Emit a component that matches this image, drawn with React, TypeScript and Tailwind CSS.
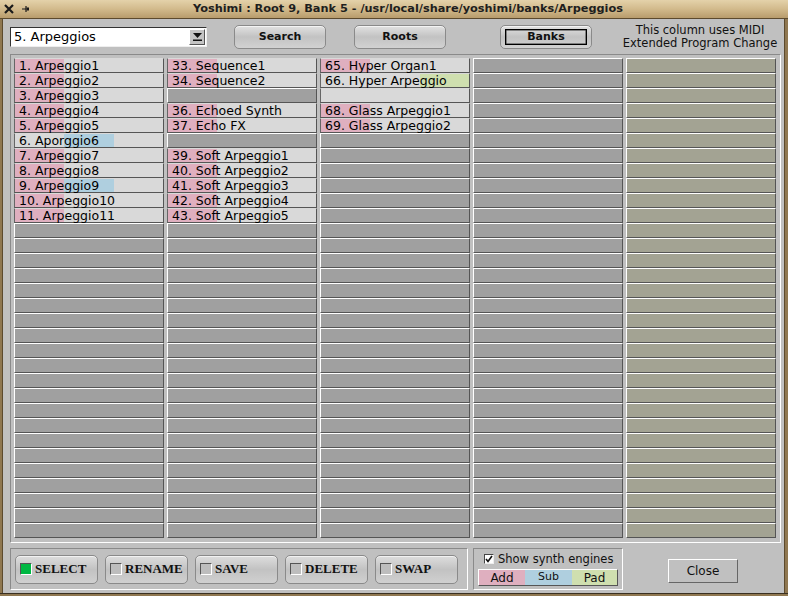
import React from 'react'

type Slot = { name: string; eng: string }

// slot number -> [name, engines]  (a = Add, s = Sub, p = Pad)
const BANK: Record<number, Slot> = {
  1: { name: 'Arpeggio1', eng: 'a' },
  2: { name: 'Arpeggio2', eng: 'a' },
  3: { name: 'Arpeggio3', eng: 'a' },
  4: { name: 'Arpeggio4', eng: 'a' },
  5: { name: 'Arpeggio5', eng: 'a' },
  6: { name: 'Aporggio6', eng: 's' },
  7: { name: 'Arpeggio7', eng: 'a' },
  8: { name: 'Arpeggio8', eng: 'a' },
  9: { name: 'Arpeggio9', eng: 'as' },
  10: { name: 'Arpeggio10', eng: 'a' },
  11: { name: 'Arpeggio11', eng: 'a' },
  33: { name: 'Sequence1', eng: 'a' },
  34: { name: 'Sequence2', eng: 'a' },
  36: { name: 'Echoed Synth', eng: 'a' },
  37: { name: 'Echo FX', eng: 'a' },
  39: { name: 'Soft Arpeggio1', eng: 'a' },
  40: { name: 'Soft Arpeggio2', eng: 'a' },
  41: { name: 'Soft Arpeggio3', eng: 'a' },
  42: { name: 'Soft Arpeggio4', eng: 'a' },
  43: { name: 'Soft Arpeggio5', eng: 'a' },
  65: { name: 'Hyper Organ1', eng: 'a' },
  66: { name: 'Hyper Arpeggio', eng: 'p' },
  67: { name: '', eng: '' },
  68: { name: 'Glass Arpeggio1', eng: 'a' },
  69: { name: 'Glass Arpeggio2', eng: 'a' },
}

const ROWS = 32
const COLS = 5

function Cell({ num, col }: { num: number; col: number }) {
  const slot = BANK[num]
  if (!slot) {
    return (
      <div
        className={`h-[15px] border border-t-white border-l-white border-b-[#555] border-r-[#555] ${
          col === 4 ? 'bg-[#a3a393]' : 'bg-[#a0a0a0]'
        }`}
      />
    )
  }
  return (
    <div className="relative h-[15px] border border-t-[#d9d9d9] border-l-[#666] border-b-[#555] border-r-[#555] bg-[#d9d9d9]">
      <div className="absolute inset-0 flex">
        <span className={`w-1/3 ${slot.eng.includes('a') ? 'bg-[#dfafbf]' : ''}`} />
        <span className={`w-1/3 ${slot.eng.includes('s') ? 'bg-[#afcfdf]' : ''}`} />
        <span className={`w-1/3 ${slot.eng.includes('p') ? 'bg-[#cfdfaf]' : ''}`} />
      </div>
      {slot.name && (
        <span className="relative block whitespace-nowrap pl-[4px] text-[12.5px] leading-[13px] text-black">
          {num}. {slot.name}
        </span>
      )}
    </div>
  )
}

function PlasticButton({ label, focused }: { label: string; focused?: boolean }) {
  return (
    <button
      type="button"
      className="flex h-[24px] w-[92px] items-center justify-center rounded-[5px] border border-[#8a8a8a] bg-linear-to-b from-[#e2e2e2] via-[#c2c2c2] to-[#d2d2d2] shadow-[inset_0_1px_0_#f4f4f4]"
    >
      <span
        className={`flex h-[16px] w-[82px] items-center justify-center text-[11px] font-bold text-[#111] ${
          focused ? 'border border-black shadow-[inset_0_0_0_0.5px_#333]' : ''
        }`}
      >
        {label}
      </span>
    </button>
  )
}

function ModeButton({ label, on }: { label: string; on?: boolean }) {
  return (
    <button
      type="button"
      className="flex h-[29px] w-[83px] items-center rounded-[5px] border border-[#8a8a8a] bg-linear-to-b from-[#dedede] via-[#c2c2c2] to-[#d0d0d0] pl-[4px] shadow-[inset_0_1px_0_#f2f2f2]"
    >
      <span
        className={`h-[12px] w-[12px] border border-t-[#555] border-l-[#555] border-b-white border-r-white ${
          on ? 'bg-[#00b843]' : 'bg-[#bdbdbd]'
        }`}
      />
      <span className="ml-[3px] font-['Liberation_Serif',serif] text-[13px] font-bold text-[#111]">
        {label}
      </span>
    </button>
  )
}

export default function App() {
  const cols = Array.from({ length: COLS }, (_, c) => c)
  const rows = Array.from({ length: ROWS }, (_, r) => r)

  return (
    <div className="flex h-[596px] w-[788px] flex-col bg-[#8f7750] font-['DejaVu_Sans',sans-serif]">
      {/* title bar */}
      <div className="relative flex h-[19px] items-center justify-center border-b border-b-[#5c4a2e] bg-linear-to-b from-[#e4d2aa] via-[#d2ba8c] to-[#b89c6c] pl-[28px]">
        <div className="absolute left-[4px] top-[4px] flex items-center gap-[8px]">
          <svg width="10" height="10" viewBox="0 0 10 10">
            <path d="M1 1 L9 9 M9 1 L1 9" stroke="#1a1a1a" strokeWidth="2.2" />
          </svg>
          <svg width="8" height="8" viewBox="0 0 8 8">
            <path d="M0 4 H4 M4 1 V7" stroke="#1a1a1a" strokeWidth="1.2" />
            <rect x="4.5" y="2.5" width="2.5" height="3" fill="#1a1a1a" />
          </svg>
        </div>
        <span className="text-[11.3px] font-bold text-[#1e1e1e]">
          Yoshimi : Root 9, Bank 5 - /usr/local/share/yoshimi/banks/Arpeggios
        </span>
      </div>

      <div className="flex flex-1">
        <div className="w-[3px] border-r border-r-[#5c4a2e]" />

        {/* window body */}
        <div className="flex w-[781px] flex-col bg-[#c0c0c0]">
          {/* top controls */}
          <div className="mt-[5px] flex h-[26px] items-center pl-[7px]">
            <div className="flex h-[20px] w-[197px] shrink-0 items-center border border-t-[#333] border-l-[#333] border-b-[#eee] border-r-[#eee] bg-white">
              <span className="flex-1 pl-[3px] text-[13px] leading-[16px] text-black">5. Arpeggios</span>
              <span className="mr-[1px] flex h-[16px] w-[16px] flex-col items-center justify-center border border-t-white border-l-white border-b-[#555] border-r-[#555] bg-[#c4c4c4]">
                <svg width="9" height="8" viewBox="0 0 9 8">
                  <path d="M0 0 H9 L4.5 5 Z" fill="#111" />
                  <rect x="0" y="6.5" width="9" height="1.5" fill="#111" />
                </svg>
              </span>
            </div>
            <div className="ml-[27px] shrink-0">
              <PlasticButton label="Search" />
            </div>
            <div className="ml-[28px] shrink-0">
              <PlasticButton label="Roots" />
            </div>
            <div className="ml-[54px] shrink-0">
              <PlasticButton label="Banks" focused />
            </div>
            <div className="ml-[20px] flex w-[176px] shrink-0 flex-col items-center whitespace-nowrap text-[11.5px] leading-[13px] text-[#111]">
              <span>This column uses MIDI</span>
              <span>Extended Program Change</span>
            </div>
          </div>

          {/* bank grid */}
          <div className="ml-[7px] mt-[4px] h-[489px] w-[771px] border border-t-[#8a8a8a] border-l-[#8a8a8a] border-b-white border-r-white pl-[3px] pt-[3px]">
            <div className="grid grid-cols-[repeat(5,150px)] gap-x-[3px]">
              {rows.map((r) =>
                cols.map((c) => <Cell key={`${c}-${r}`} num={c * ROWS + r + 1} col={c} />)
              )}
            </div>
          </div>

          {/* bottom controls */}
          <div className="mt-[5px] flex h-[42px] items-stretch pl-[7px]">
            <div className="flex w-[458px] items-center gap-[7px] border border-t-[#8a8a8a] border-l-[#8a8a8a] border-b-white border-r-white pl-[4px]">
              <ModeButton label="SELECT" on />
              <ModeButton label="RENAME" />
              <ModeButton label="SAVE" />
              <ModeButton label="DELETE" />
              <ModeButton label="SWAP" />
            </div>

            <div className="ml-[5px] flex w-[150px] flex-col border border-t-[#8a8a8a] border-l-[#8a8a8a] border-b-white border-r-white pl-[4px] pt-[3px]">
              <div className="flex h-[14px] items-center pl-[6px]">
                <span className="flex h-[10px] w-[10px] items-center justify-center border border-t-[#444] border-l-[#444] border-b-[#eee] border-r-[#eee] bg-white">
                  <svg width="8" height="8" viewBox="0 0 8 8">
                    <path d="M1 4 L3 6.5 L7 1" stroke="#111" strokeWidth="1.6" fill="none" />
                  </svg>
                </span>
                <span className="ml-[4px] whitespace-nowrap text-[11.5px] leading-[13px] text-[#111]">Show synth engines</span>
              </div>
              <div className="mt-[3px] flex h-[17px] w-[140px] border border-t-white border-l-white border-b-[#555] border-r-[#555]">
                <span className="flex w-[46px] items-center justify-center bg-[#dfafbf] text-[12px] text-[#111]">Add</span>
                <span className="flex w-[47px] items-center justify-center bg-[#afcfdf] text-[11px] text-[#111]">Sub</span>
                <span className="flex flex-1 items-center justify-center bg-[#cfdfaf] text-[12px] text-[#111]">Pad</span>
              </div>
            </div>

            <div className="ml-[45px] flex items-center pt-[4px]">
              <button
                type="button"
                className="flex h-[24px] w-[70px] items-center justify-center border border-t-white border-l-white border-b-[#666] border-r-[#666] bg-[#c0c0c0] text-[12px] text-[#111]"
              >
                Close
              </button>
            </div>
          </div>
        </div>

        <div className="w-[4px] border-l border-l-[#5c4a2e]" />
      </div>
      <div className="h-[3px] border-t border-t-[#3a3022] bg-[#8f7750]" />
    </div>
  )
}
